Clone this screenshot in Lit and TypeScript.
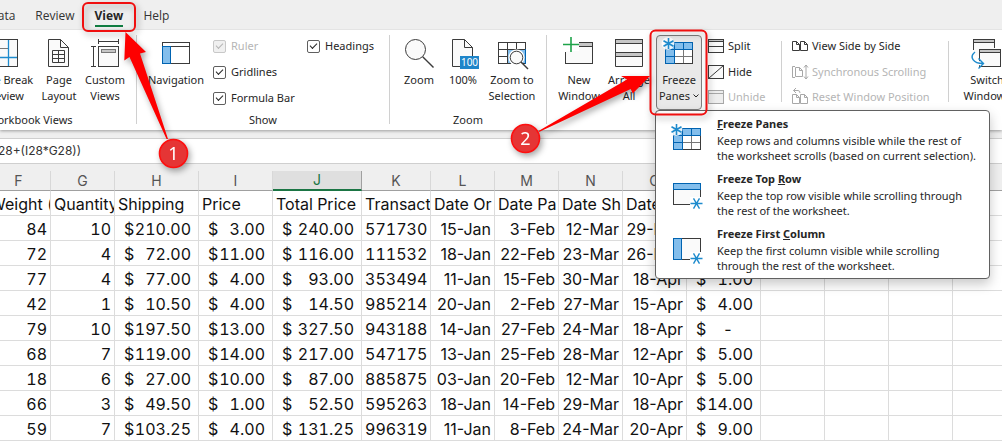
import { LitElement, html, css, svg, nothing } from "lit";
import { customElement } from "lit/decorators.js";

const INK = "#3b3b3b";
const BLUE = "#0063b1";
const SKY = "#83beec";
const GREY = "#c6c6c6";

const flake = (x: number, y: number, r: number) => {
  const a = Math.round(r * 0.5 * 10) / 10;
  const b = Math.round(r * 0.85 * 10) / 10;
  return svg`<g stroke="#1e8bcd" stroke-width="1.4" fill="none">
    <path d="M${x - r} ${y}H${x + r}M${x - a} ${y - b}L${x + a} ${y + b}M${x + a} ${y - b}L${x - a} ${y + b}"></path></g>`;
};

const paneGrid = svg`
  <rect x="1.5" y="4.5" width="27" height="21" fill="#fff" stroke="${INK}"></rect>
  <path d="M10.5 18.5H28M19.5 11.5V25" stroke="#777"></path>
  <path d="M1.5 4.5H28.5V11.5H10.5V25.5H1.5Z" fill="${SKY}" stroke="${BLUE}"></path>
  <path d="M1.5 11.5H10.5V4.5M19.5 4.5V11.5M1.5 18.5H10.5" fill="none" stroke="${BLUE}"></path>
  <circle cx="4" cy="5.5" r="6.5" fill="#fff" fill-opacity=".85"></circle>
  <g stroke="#1e8bcd" stroke-width="1.6"><path d="M4.500 0V11M-.5 2.7L9.500 8.3M9.500 2.7L-.5 8.3"></path></g>`;

const big: Record<string, unknown> = {
  pageBreak: svg`<rect x="1.5" y="1.5" width="27" height="27" fill="#fafafa" stroke="${INK}"></rect>
    <path d="M2 10.5H19M10.5 2V28" stroke="#777"></path>
    <path d="M19.5 2V28M2 19.5H28" stroke="#1e8bcd" stroke-width="1.3"></path>`,
  pageLayout: svg`<path d="M4.5 1.5H16.5L24.5 9.5V28.5H4.5Z" fill="#fafafa" stroke="${INK}"></path>
    <path d="M16.5 1.5V9.5H24.5" fill="none" stroke="${INK}"></path>
    <path d="M8.5 12.5H20.5V24.5H8.5ZM14.5 12.5V24.5M8.5 16.5H20.5M8.5 20.5H20.5" fill="none" stroke="${INK}"></path>`,
  customViews: svg`<rect x="8.5" y="8.5" width="20" height="20" fill="#fafafa" stroke="${INK}"></rect>
    <rect x="11.5" y="11.5" width="14" height="3" fill="${GREY}" stroke="#777"></rect>
    <path d="M8.5 3.5H28.5M8.5 1V6M28.5 1V6M3.5 8.5V28.5M1 8.5H6M1 28.5H6" stroke="${INK}"></path>`,
  navigation: svg`<rect x="1.5" y="4.5" width="27" height="21" fill="#fff" stroke="${INK}"></rect>
    <path d="M1.5 8.5H28.5" stroke="${INK}"></path>
    <rect x="1.5" y="8.5" width="8" height="17" fill="${SKY}" stroke="${BLUE}"></rect>`,
  zoom: svg`<circle cx="11.5" cy="11.5" r="10" fill="#fafafa" stroke="${INK}"></circle>
    <path d="M18.7 18.7L29.5 29.5" stroke="${INK}" stroke-width="1.4"></path>`,
  hundred: svg`<path d="M4.5 1.5H16.5L24.5 9.5V28.5H4.5Z" fill="#fafafa" stroke="${INK}"></path>
    <path d="M16.5 1.5V9.5H24.5" fill="none" stroke="${INK}"></path>
    <rect x="12" y="18" width="19" height="13" fill="#1e85c9"></rect>
    <text x="21.5" y="28" text-anchor="middle" font-size="10" fill="#fff">100</text>`,
  zoomSelection: svg`<rect x="1.5" y="4.5" width="27" height="21" fill="#fff" stroke="${INK}"></rect>
    <rect x="11" y="12" width="17" height="13" fill="${SKY}"></rect>
    <path d="M1.5 11.5H28M1.5 18.5H10M10.5 5V25M19.5 5V11" stroke="${INK}"></path>
    <path d="M28.5 11V26" stroke="${BLUE}"></path>
    <circle cx="19.5" cy="19.5" r="8" fill="#fff"></circle>
    <circle cx="19.5" cy="19.5" r="6.3" fill="#fafafa" stroke="${INK}"></circle>
    <path d="M24 24L31 31" stroke="${INK}" stroke-width="1.4"></path>`,
  newWindow: svg`<rect x="1.5" y="4.5" width="27" height="21" fill="#fafafa" stroke="${INK}"></rect>
    <rect x="1.5" y="4.5" width="27" height="4" fill="${GREY}" stroke="${INK}"></rect>
    <path d="M-1 0H15V13H2V14H-1Z" fill="#fff"></path>
    <path d="M7 -1V14M-1 6.5H15" stroke="#1fa34a" stroke-width="1.6"></path>`,
  arrange: svg`<path d="M1.5 1.5H28.5V28.5H1.5Z" fill="#fafafa" stroke="${INK}"></path>
    <rect x="1.5" y="1.5" width="27" height="4" fill="${GREY}" stroke="${INK}"></rect>
    <rect x="1.5" y="14.5" width="27" height="4" fill="${GREY}" stroke="${INK}"></rect>`,
  freeze: paneGrid,
  topRow: svg`<rect x="1.5" y="4.5" width="27" height="21" fill="#fafafa" stroke="${INK}"></rect>
    <rect x="1.5" y="4.5" width="27" height="6" fill="${SKY}" stroke="${BLUE}"></rect>
    <rect x="18" y="18" width="13" height="13" fill="#fff"></rect>${flake(24.5, 24.5, 6)}`,
  firstColumn: svg`<rect x="1.5" y="4.5" width="27" height="21" fill="#fafafa" stroke="${INK}"></rect>
    <rect x="1.5" y="4.5" width="8" height="21" fill="${SKY}" stroke="${BLUE}"></rect>
    <rect x="18" y="18" width="13" height="13" fill="#fff"></rect>${flake(24.5, 24.5, 6)}`,
  switchWindows: svg`<path d="M7 17.5H1.5V1.5H22.5V11" fill="#fafafa"></path>
    <path d="M1.5 12V1.5H22.5V10" fill="none" stroke="${INK}"></path>
    <rect x="1.5" y="1.5" width="21" height="3" fill="${GREY}" stroke="${INK}"></rect>
    <rect x="7.5" y="11.5" width="21" height="17" fill="#fafafa" stroke="${INK}"></rect>
    <rect x="7.5" y="11.5" width="21" height="3" fill="${GREY}" stroke="${INK}"></rect>
    <path d="M3 14C-3 19 1 25.500 11 25.500" fill="none" stroke="#fff" stroke-width="4"></path>
    <path d="M3 14C-3 19 1 25.500 11 25.500M6.500 20.500L11.500 25.500L6.500 30.500" fill="none" stroke="#1e8bcd" stroke-width="1.4"></path>`,
};

const page = (x: number, y: number) =>
  svg`<path d="M${x} ${y}H${x + 4}L${x + 7} ${y + 3}V${y + 9}H${x}ZM${x + 4} ${y}V${y + 3}H${x + 7}" fill="none"></path>`;

const small: Record<string, unknown> = {
  split: svg`<rect x=".5" y="1.500" width="15" height="13" fill="#fafafa"></rect><rect x=".5" y="1.500" width="15" height="2" fill="${GREY}"></rect><path d="M.5 8.500H15.500"></path>`,
  hide: svg`<rect x=".5" y="1.500" width="15" height="13" fill="#fafafa"></rect><path d="M.5 14.500L15.500 1.500"></path>`,
  unhide: svg`<rect x=".5" y="1.500" width="15" height="13" fill="#eee"></rect><path d="M.5 4.500H15.500"></path>`,
  sideBySide: svg`${page(0.5, 3.5)}${page(8.5, 3.5)}`,
  sync: svg`<path d="M3 2.500H.5V13.500H3" fill="none"></path>${page(3.5, 3.5)}
    <path d="M14 1V15M12 3.500L14 1L16 3.500M12 12.500L14 15L16 12.500" fill="none"></path>`,
  reset: svg`${page(0.5, 5.5)}${page(8.5, 5.5)}<path d="M4 -1L1.500 1.500L4 4M1.500 1.500H6Q8 1.500 8 4" fill="none"></path>`,
};

const bigIcon = (name: string) =>
  html`<svg class="icon" width="30" height="30" viewBox="0 0 30 30" aria-hidden="true">${big[name]}</svg>`;

const bigButton = (icon: string, lines: string[], size = "w50") =>
  html`<button class="big ${size}">${bigIcon(icon)}${lines.map((l) => html`<span>${l}</span>`)}</button>`;

const smallButton = (icon: string, label: string, off = false) =>
  html`<button class="small" ?disabled=${off}>
    <svg width="16" height="16" viewBox="0 0 16 16" aria-hidden="true">${small[icon]}</svg>${label}
  </button>`;

const check = (label: string, off = false) =>
  html`<label class="check ${off ? "off" : ""}"><input type="checkbox" checked ?disabled=${off} />${label}</label>`;

@customElement("ribbon-bar")
class RibbonBar extends LitElement {
  static styles = css`
    :host { display: block; font: 11px/16px "Noto Sans", "Open Sans", sans-serif; color: #262626; }
    button { font: inherit; color: inherit; background: none; border: 0; padding: 0; margin: 0; }
    svg { overflow: visible; flex: none; }
    .tabs { display: flex; gap: 20px; height: 30px; align-items: flex-start; background: #efefef; overflow: hidden; box-sizing: border-box; padding-top: 6px; border-bottom: 1px solid #e4e4e4; font: 12px/19px "Open Sans", "Noto Sans", sans-serif; }
    .tabs a { color: #333; text-decoration: none; height: 19px; flex: none; }
    .tabs a:first-child { margin-left: -11px; }
    .tabs .current { font-weight: 700; color: #262626; border-bottom: 2px solid #107c41; }
    .ribbon { display: flex; align-items: flex-start; background: #fff; height: 100px; box-sizing: border-box; padding-top: 5px; overflow: hidden; }
    .group { display: flex; flex-direction: column; flex: none; gap: 2px; }
    .tools { display: flex; height: 75px; }
    .caption { text-align: center; }
    .views { width: 212px; margin-left: -76px; }
    .views .tools { justify-content: flex-end; padding-right: 8px; }
    .show { width: 252px; }
    .show .tools { padding-left: 7px; }
    .zoom { width: 156px; }
    .zoom .tools { padding-left: 4px; }
    .window .tools { padding-left: 7px; }
    .rule { flex: none; width: 1px; height: 89px; background: #d0d0d0; }
    .rule.short { height: 61px; margin-top: 6px; }
    .big { display: flex; flex-direction: column; align-items: center; box-sizing: border-box; flex: none; height: 75px; padding-top: 3px; white-space: nowrap; }
    .big .icon { margin-bottom: 4px; }
    .w38 { width: 38px; }
    .w46 { width: 46px; }
    .w50 { width: 50px; }
    .w60 { width: 60px; }
    .w64 { width: 64px; }
    .open { width: 46px; margin: 0 2px; border: 1px solid #7d7d7d; border-radius: 4px; background: #e9e9e9; padding-top: 2px; }
    .panes { display: flex; align-items: center; gap: 3px; }
    .checks { display: grid; grid-template-columns: 94px auto; grid-auto-rows: 26px; align-content: start; margin-left: 5px; margin-top: -2px; }
    .check { display: flex; align-items: center; gap: 5px; white-space: nowrap; }
    .check input { appearance: none; box-sizing: border-box; width: 13px; height: 13px; margin: 0; border: 1px solid #5f5f5f; border-radius: 2px; display: grid; place-items: center; background: #fff; flex: none; }
    .check input::after { content: ""; width: 6px; height: 3px; margin-top: -2px; border: solid #262626; border-width: 0 0 1px 1px; transform: rotate(-45deg); }
    .off { color: #b5b5b5; }
    .check.off input { border-color: #c8c8c8; background: #f0f0f0; }
    .check.off input::after { border-color: #b5b5b5; }
    .list { display: flex; flex-direction: column; margin-top: -2px; }
    .small { display: flex; align-items: center; gap: 4px; height: 26px; white-space: nowrap; stroke: #3b3b3b; }
    .small:disabled { color: #b5b5b5; stroke: #a8a8a8; }
    .edge { margin-left: 4px; margin-right: 10px; width: 63px; }
    .pairs { margin-left: 10px; width: 156px; }
    .last { margin-left: 8px; }
  `;
  render() {
    return html`
      <nav class="tabs">
        <a href="#data">Data</a><a href="#review">Review</a><a href="#view" class="current" aria-current="page">View</a><a href="#help">Help</a>
      </nav>
      <div class="ribbon">
        <section class="group views">
          <div class="tools">
            ${bigButton("pageBreak", ["Page Break", "Preview"], "w64")}
            ${bigButton("pageLayout", ["Page", "Layout"], "w46")}
            ${bigButton("customViews", ["Custom", "Views"], "w46")}
          </div>
          <div class="caption">Workbook Views</div>
        </section>
        <span class="rule"></span>
        <section class="group show">
          <div class="tools">
            ${bigButton("navigation", ["Navigation"], "w64")}
            <div class="checks">
              ${check("Ruler", true)}${check("Headings")}${check("Gridlines")}<span></span>${check("Formula Bar")}
            </div>
          </div>
          <div class="caption">Show</div>
        </section>
        <span class="rule"></span>
        <section class="group zoom">
          <div class="tools">
            ${bigButton("zoom", ["Zoom"])}${bigButton("hundred", ["100%"], "w38")}${bigButton("zoomSelection", ["Zoom to", "Selection"], "w60")}
          </div>
          <div class="caption">Zoom</div>
        </section>
        <span class="rule"></span>
        <section class="group window">
          <div class="tools">
            ${bigButton("newWindow", ["New", "Window"])}${bigButton("arrange", ["Arrange", "All"])}
            <button class="big open" aria-haspopup="menu" aria-expanded="true">
              ${bigIcon("freeze")}<span>Freeze</span>
              <span class="panes">Panes<svg width="6" height="4" viewBox="0 0 6 4" aria-hidden="true"><path d="M.5 .5L3 3L5.500 .5" fill="none" stroke="#262626"></path></svg></span>
            </button>
            <div class="list edge">${smallButton("split", "Split")}${smallButton("hide", "Hide")}${smallButton("unhide", "Unhide", true)}</div>
            <span class="rule short"></span>
            <div class="list pairs">
              ${smallButton("sideBySide", "View Side by Side")}${smallButton("sync", "Synchronous Scrolling", true)}${smallButton("reset", "Reset Window Position", true)}
            </div>
            <span class="rule short"></span>
            <div class="last">${bigButton("switchWindows", ["Switch", "Windows"], "w60")}</div>
          </div>
        </section>
      </div>
    `;
  }
}

@customElement("freeze-menu")
class FreezeMenu extends LitElement {
  static styles = css`
    :host { display: block; box-sizing: border-box; width: 335px; padding: 2px 0 0; background: #fff; border: 1px solid #616161; border-radius: 4px; box-shadow: 0 5px 12px rgba(0, 0, 0, 0.22); font: 11px/15px "Noto Sans", "Open Sans", sans-serif; color: #262626; }
    .item { display: flex; align-items: center; gap: 15px; width: 100%; height: 55px; padding: 0 0 3px 16px; border: 0; background: none; font: inherit; color: inherit; text-align: left; white-space: nowrap; }
    .text { display: block; }
    .title { display: block; font-weight: 700; line-height: 18px; }
    .line { display: block; }
    svg { overflow: visible; flex: none; }
  `;
  item(icon: string, title: unknown, lines: string[]) {
    return html`<button class="item" role="menuitem">
      ${bigIcon(icon)}
      <span class="text"><span class="title">${title}</span>${lines.map((l) => html`<span class="line">${l}</span>`)}</span>
    </button>`;
  }
  render() {
    return html`
      ${this.item("freeze", html`<u>F</u>reeze Panes`, ["Keep rows and columns visible while the rest of", "the worksheet scrolls (based on current selection)."])}
      ${this.item("topRow", html`Freeze Top <u>R</u>ow`, ["Keep the top row visible while scrolling through", "the rest of the worksheet."])}
      ${this.item("firstColumn", html`Freeze First <u>C</u>olumn`, ["Keep the first column visible while scrolling", "through the rest of the worksheet."])}
    `;
  }
}

const COLUMNS = [
  { id: "F", w: 64 }, { id: "G", w: 64 }, { id: "H", w: 84 }, { id: "I", w: 74 }, { id: "J", w: 89 },
  { id: "K", w: 69 }, { id: "L", w: 64 }, { id: "M", w: 64 }, { id: "N", w: 64 }, { id: "O", w: 64 },
  { id: "P", w: 74 }, { id: "Q", w: 64 }, { id: "R", w: 64 }, { id: "S", w: 64 }, { id: "T", w: 64 },
];
const TITLES = ["Weight (lbs)", "Quantity", "Shipping", "Price", "Total Price", "Transact", "Date Or", "Date Pa", "Date Sh", "Date De", "", "", "", "", ""];
const ROWS = [
  ["84", "10", "$210.00", "$3.00", "$240.00", "571730", "15-Jan", "3-Feb", "12-Mar", "29-Mar", "$4.00"],
  ["72", "4", "$72.00", "$11.00", "$116.00", "111532", "18-Jan", "22-Feb", "23-Mar", "26-Mar", "$5.00"],
  ["77", "4", "$77.00", "$4.00", "$93.00", "353494", "11-Jan", "15-Feb", "30-Mar", "18-Apr", "$1.00"],
  ["42", "1", "$10.50", "$4.00", "$14.50", "985214", "20-Jan", "2-Feb", "27-Mar", "15-Apr", "$4.00"],
  ["79", "10", "$197.50", "$13.00", "$327.50", "943188", "14-Jan", "27-Feb", "24-Mar", "18-Apr", "$-"],
  ["68", "7", "$119.00", "$14.00", "$217.00", "547175", "13-Jan", "25-Feb", "28-Mar", "12-Apr", "$5.00"],
  ["18", "6", "$27.00", "$10.00", "$87.00", "885875", "03-Jan", "20-Feb", "12-Mar", "10-Apr", "$5.00"],
  ["66", "3", "$49.50", "$1.00", "$52.50", "595263", "18-Jan", "14-Feb", "29-Mar", "18-Apr", "$14.00"],
  ["59", "7", "$103.25", "$4.00", "$131.25", "996319", "11-Jan", "8-Feb", "24-Mar", "20-Apr", "$9.00"],
];

@customElement("work-sheet")
class WorkSheet extends LitElement {
  static styles = css`
    :host { display: block; overflow: hidden; background: #fff; font: 16px/22px Inter, "Noto Sans", sans-serif; color: #111; }
    table { margin-left: -13px; width: 1030px; min-width: calc(100% + 13px); table-layout: fixed; border-collapse: separate; border-spacing: 0; font-variant-numeric: tabular-nums; }
    .heads th { height: 20px; box-sizing: border-box; padding: 0; font: 14px/19px Inter, sans-serif; color: #555; background: #efefef; border-right: 1px solid #d8d8d8; border-bottom: 1px solid #a0a0a0; }
    .heads .active { background: #dfdfdf; color: #1b7544; border-bottom: 2px solid #1b7544; border-right-color: #a0a0a0; line-height: 18px; }
    .cell { height: 25px; box-sizing: border-box; padding: 2px 3px 0; border-right: 1px solid #dcdcdc; border-bottom: 1px solid #dcdcdc; text-align: right; font-weight: 400; white-space: nowrap; overflow: hidden; }
    .title { text-align: left; }
    .date { font-variant-numeric: normal; }
    .money { padding: 2px 7px 0 9px; }
    .sum { display: flex; justify-content: space-between; }
    .dash { padding-right: 20px; }
  `;
  cell(v: string | undefined) {
    if (!v) return html`<td class="cell"></td>`;
    if (v.startsWith("$")) {
      const n = v.slice(1);
      return html`<td class="cell money"><span class="sum"><span>$</span><span class=${n === "-" ? "dash" : "amount"}>${n}</span></span></td>`;
    }
    return html`<td class="cell ${v.includes("-") ? "date" : ""}">${v}</td>`;
  }
  render() {
    return html`<table>
      <colgroup>${COLUMNS.map((c) => html`<col style="width:${c.w}px" />`)}</colgroup>
      <thead>
        <tr class="heads">${COLUMNS.map((c) => html`<th scope="col" class=${c.id === "J" ? "active" : nothing}>${c.id}</th>`)}</tr>
      </thead>
      <tbody>
        <tr>${TITLES.map((t) => html`<td class="cell title">${t}</td>`)}</tr>
        ${ROWS.map((r) => html`<tr>${COLUMNS.map((_, i) => this.cell(r[i]))}</tr>`)}
      </tbody>
    </table>`;
  }
}

@customElement("app-root")
class AppRoot extends LitElement {
  static styles = css`
    :host { display: block; position: relative; overflow: hidden; background: #efefef; min-height: 100vh; }
    .top { display: block; position: relative; box-shadow: 0 1px 3px rgba(0, 0, 0, 0.35); }
    .formula { display: flex; height: 24px; margin: 8px 0 7px; background: #fff; border: solid #cfcfcf; border-width: 1px 0; overflow: hidden; }
    .formula input { flex: 1; min-width: 0; margin: 0 0 0 -11px; padding: 0; border: 0; outline: 0; background: none; font: 12px/24px Inter, sans-serif; color: #333; }
    .menu { position: absolute; left: 655px; top: 110px; }
    .marks { position: absolute; left: 0; top: 0; pointer-events: none; overflow: visible; filter: drop-shadow(2px 3px 3px rgba(0, 0, 0, 0.35)); }
    .num { font: 18px "Noto Sans", sans-serif; fill: #fff; text-anchor: middle; }
  `;
  render() {
    return html`
      <ribbon-bar class="top"></ribbon-bar>
      <div class="formula"><input aria-label="Formula" value="H28+(I28*G28))" /></div>
      <work-sheet></work-sheet>
      <freeze-menu class="menu" role="menu"></freeze-menu>
      <svg class="marks" width="720" height="180" viewBox="0 0 720 180" aria-hidden="true">
        <rect x="83" y="3" width="52" height="28" rx="5" fill="none" stroke="#f00f0f" stroke-width="2"></rect>
        <rect x="650.500" y="30.500" width="56" height="84" rx="5" fill="none" stroke="#f00f0f" stroke-width="2"></rect>
        <path d="M125.500 32L146 52L140 53.500L168 139H166.500L129.500 57L124.300 60.500Z" fill="#fe0000"></path>
        <path d="M650 76L632.700 93.500L630.700 89L539 132L538.500 131L627 79.500L621 76Z" fill="#fe0000"></path>
        <circle cx="173.500" cy="153.500" r="14" fill="#e53535" stroke="#fe0f0f" stroke-width="1.600"></circle>
        <circle cx="525.500" cy="138.500" r="14" fill="#e53535" stroke="#fe0f0f" stroke-width="1.600"></circle>
        <text class="num" x="173.500" y="160">1</text>
        <text class="num" x="525.500" y="145">2</text>
      </svg>
    `;
  }
}
